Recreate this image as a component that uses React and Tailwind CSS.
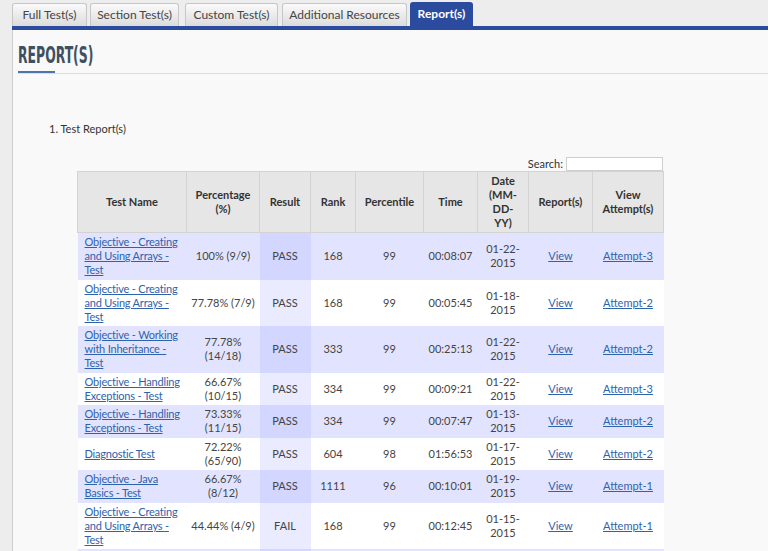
import React from "react";

const tabs = [
  { label: "Full Test(s)", w: "w-[75px]", ml: "ml-0" },
  { label: "Section Test(s)", w: "w-[89px]", ml: "ml-[3px]" },
  { label: "Custom Test(s)", w: "w-[93px]", ml: "ml-[6px]" },
  { label: "Additional Resources", w: "w-[125px]", ml: "ml-[4px]" },
];

const rows = [
  { name: ["Objective - Creating", "and Using Arrays -", "Test"], pct: ["100% (9/9)"], res: "PASS", rank: "168", pctl: "99", time: "00:08:07", date: "01-22-", att: "Attempt-3" },
  { name: ["Objective - Creating", "and Using Arrays -", "Test"], pct: ["77.78% (7/9)"], res: "PASS", rank: "168", pctl: "99", time: "00:05:45", date: "01-18-", att: "Attempt-2" },
  { name: ["Objective - Working", "with Inheritance -", "Test"], pct: ["77.78%", "(14/18)"], res: "PASS", rank: "333", pctl: "99", time: "00:25:13", date: "01-22-", att: "Attempt-2" },
  { name: ["Objective - Handling", "Exceptions - Test"], pct: ["66.67%", "(10/15)"], res: "PASS", rank: "334", pctl: "99", time: "00:09:21", date: "01-22-", att: "Attempt-3" },
  { name: ["Objective - Handling", "Exceptions - Test"], pct: ["73.33%", "(11/15)"], res: "PASS", rank: "334", pctl: "99", time: "00:07:47", date: "01-13-", att: "Attempt-2" },
  { name: ["Diagnostic Test"], pct: ["72.22%", "(65/90)"], res: "PASS", rank: "604", pctl: "98", time: "01:56:53", date: "01-17-", att: "Attempt-2" },
  { name: ["Objective - Java", "Basics - Test"], pct: ["66.67%", "(8/12)"], res: "PASS", rank: "1111", pctl: "96", time: "00:10:01", date: "01-19-", att: "Attempt-1" },
  { name: ["Objective - Creating", "and Using Arrays -", "Test"], pct: ["44.44% (4/9)"], res: "FAIL", rank: "168", pctl: "99", time: "00:12:45", date: "01-15-", att: "Attempt-1" },
];

const Lines = ({ parts }) =>
  parts.map((p, i) => (
    <React.Fragment key={i}>
      {i > 0 && <br />}
      {p}
    </React.Fragment>
  ));

const th = "border-l border-[#d3d3d3] first:border-l-0 px-[4px] py-[2px] font-bold text-center align-middle";
const td = "px-[4px] pt-[2px] pb-[2.5px] text-center align-middle whitespace-nowrap";

export default function App() {
  return (
    <div
      className="w-[768px] h-[551px] overflow-hidden flex bg-[#ededed] text-[#444]"
      style={{ fontFamily: "Lato, 'Open Sans', sans-serif" }}
    >
      <div className="w-[12px] shrink-0" />
      <div className="flex-1 min-w-0">
        {/* tabs */}
        <div className="h-[26px] flex items-end">
          {tabs.map((t) => (
            <div
              key={t.label}
              className={`${t.w} ${t.ml} h-[23px] flex items-center justify-center rounded-t-[3px] border border-b-0 border-[#c6c6c6] bg-gradient-to-b from-[#fafafa] to-[#dcdcdc] text-[12px] text-[#454545]`}
            >
              {t.label}
            </div>
          ))}
          <div className="w-[63px] ml-[3px] h-[24px] flex items-center justify-center rounded-t-[3px] bg-[#2b4b9e] text-[12px] font-bold text-white">
            Report(s)
          </div>
        </div>
        <div className="h-[4px] bg-[#2b4b9e]" />

        {/* panel */}
        <div className="h-[600px] bg-[#f9f9f9] border-l border-[#cfcfcf]">
          <div className="ml-[5px] h-[44px] relative border-b border-[#dcdcdc]">
            <div
              className="absolute left-0 top-[14px] text-[23px] leading-none font-bold text-[#3e5062] origin-left scale-x-[0.6] whitespace-nowrap"
              style={{ fontFamily: "'DejaVu Sans Condensed', 'DejaVu Sans', sans-serif" }}
            >
              REPORT(S)
            </div>
            <div className="absolute left-0 bottom-0 w-[37px] h-[2px] bg-[#4d75ab]" />
          </div>

          <div className="ml-[36px] mt-[48px] text-[11px] leading-[14px] text-[#333]">1. Test Report(s)</div>

          <div className="ml-[64px] w-[586px] mt-[21px]">
            <div className="flex justify-end items-center h-[14px] text-[11px] text-[#333]">
              <span className="mr-[3px]">Search:</span>
              <span className="w-[97px] h-[14px] bg-white border border-[#cfcfcf]" />
            </div>
            <table className="w-[586px] table-fixed border-collapse text-[11px] leading-[14px]">
              <colgroup>
                <col className="w-[109px]" />
                <col className="w-[73px]" />
                <col className="w-[51px]" />
                <col className="w-[45px]" />
                <col className="w-[68px]" />
                <col className="w-[54px]" />
                <col className="w-[51px]" />
                <col className="w-[64px]" />
                <col className="w-[71px]" />
              </colgroup>
              <thead>
                <tr className="bg-[#e6e6e6] text-[#333] h-[60px] border border-[#d3d3d3]">
                  <th className={th}>Test Name</th>
                  <th className={th}>Percentage<br />(%)</th>
                  <th className={th}>Result</th>
                  <th className={th}>Rank</th>
                  <th className={th}>Percentile</th>
                  <th className={th}>Time</th>
                  <th className={th}>Date<br />(MM-<br />DD-<br />YY)</th>
                  <th className={th}>Report(s)</th>
                  <th className={th}>View<br />Attempt(s)</th>
                </tr>
              </thead>
              <tbody>
                {rows.map((r, i) => {
                  const odd = i % 2 === 0;
                  return (
                    <tr key={i} className={odd ? "bg-[#e2e4ff]" : "bg-white"}>
                      <td className="pl-[7px] pr-0 pt-[2px] pb-[2.5px] text-left align-middle whitespace-nowrap tracking-[-0.2px]">
                        <a href="#" className="text-[#2f62ad] underline">
                          <Lines parts={r.name} />
                        </a>
                      </td>
                      <td className={td}><Lines parts={r.pct} /></td>
                      <td className={`${td} ${odd ? "bg-[#d3d6ff]" : "bg-[#eaebff]"}`}>{r.res}</td>
                      <td className={td}>{r.rank}</td>
                      <td className={td}>{r.pctl}</td>
                      <td className={td}>{r.time}</td>
                      <td className={td}>{r.date}<br />2015</td>
                      <td className={td}>
                        <a href="#" className="text-[#2f62ad] underline">View</a>
                      </td>
                      <td className={td}>
                        <a href="#" className="text-[#2f62ad] underline">{r.att}</a>
                      </td>
                    </tr>
                  );
                })}
                <tr className="bg-[#e2e4ff] h-[20px]">
                  <td colSpan={2} />
                  <td className="bg-[#d3d6ff]" />
                  <td colSpan={6} />
                </tr>
              </tbody>
            </table>
          </div>
        </div>
      </div>
    </div>
  );
}
